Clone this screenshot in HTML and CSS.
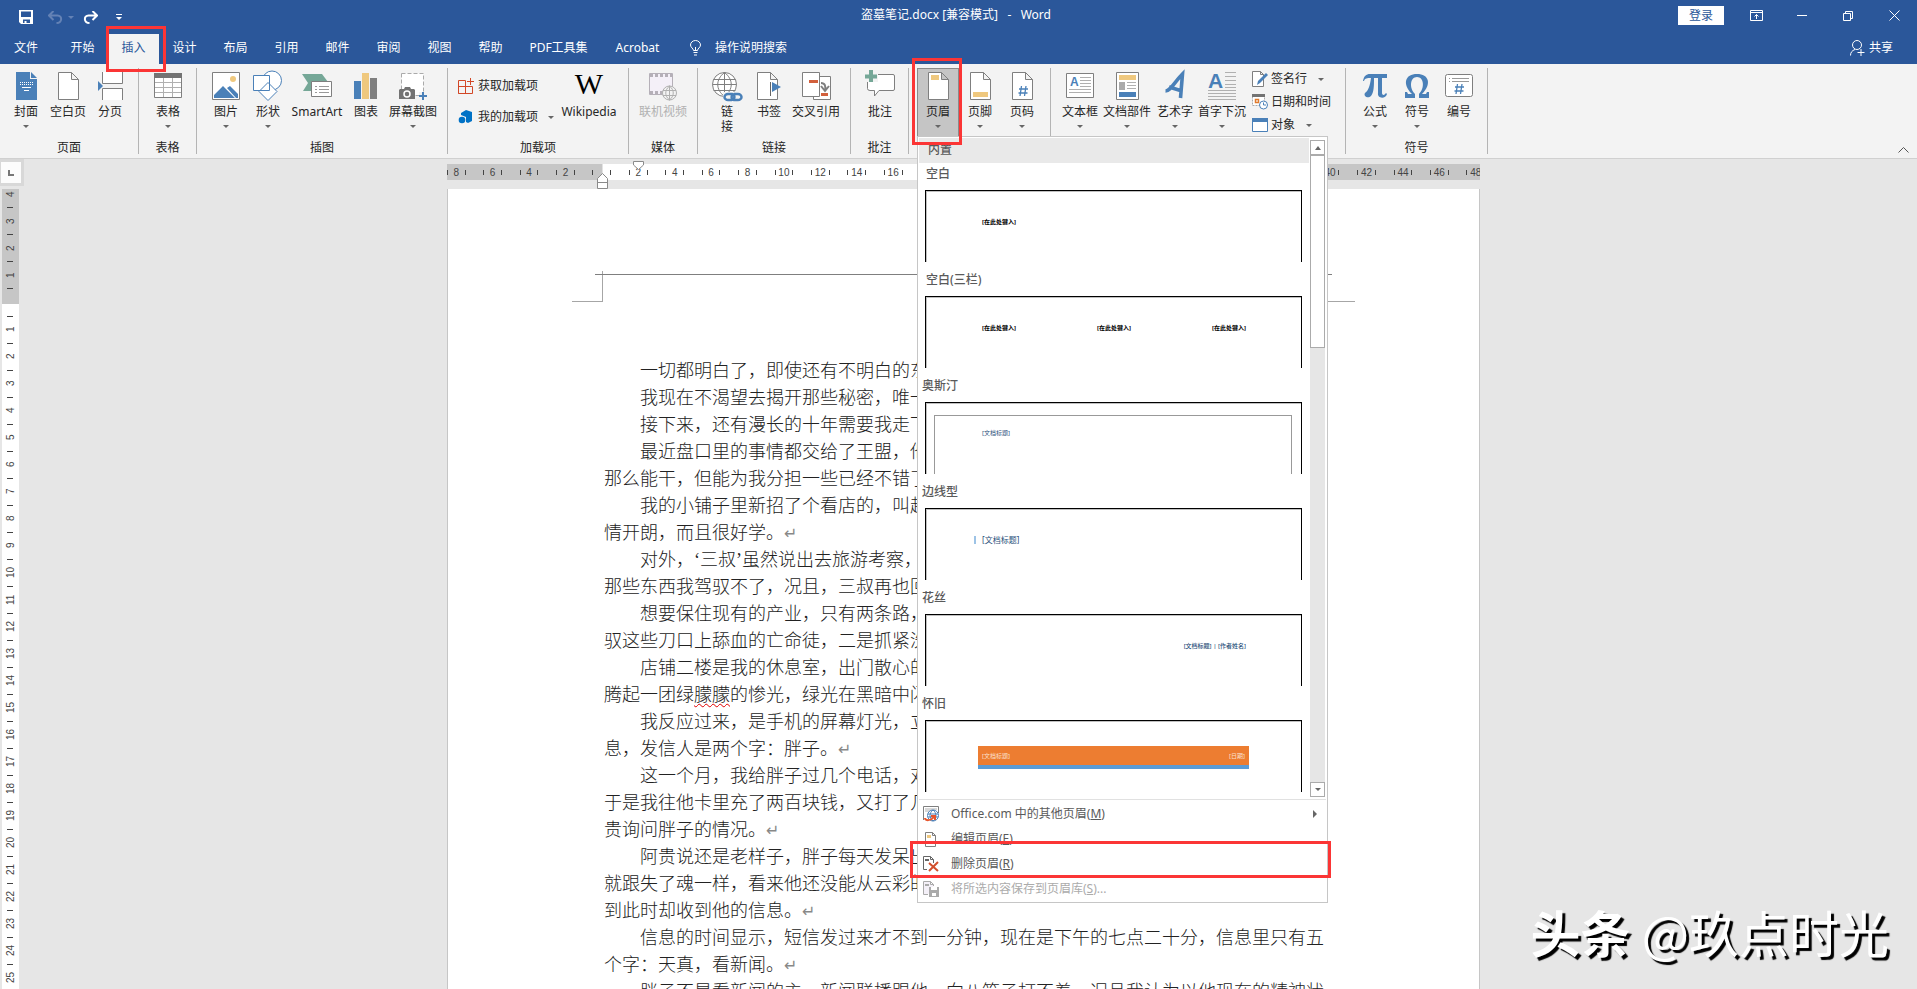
FILE: index.html
```html
<!DOCTYPE html>
<html lang="zh-CN">
<head>
<meta charset="utf-8">
<title>盗墓笔记.docx - Word</title>
<link rel="stylesheet" href="styles.css">
</head>
<body>
<header class="titlebar">
  <div class="quick">
    <button class="icon-btn save" aria-label="保存"><svg width="14" height="14" viewBox="0 0 14 14"><path d="M0 0h14v14H2l-2-2z" fill="#fff"/><path d="M2 1.500h10V7H2zM4 9.500h7V13H7.500v-2H5.500v2H4z" fill="#2b579a"/></svg></button>
    <button class="icon-btn undo" aria-label="撤消"><svg width="15" height="13" viewBox="0 0 15 13"><path d="M5.500 0L1 4.500 5.500 9M1.500 4.500h8c5 0 5 7.500-1 7.500" fill="none" stroke="#6482b5" stroke-width="2"/></svg></button>
    <span class="caret faded"></span>
    <button class="icon-btn redo" aria-label="恢复"><svg width="15" height="13" viewBox="0 0 15 13"><path d="M9.500 0L14 4.500 9.500 9M13.500 4.500h-8c-5 0-5 7.500 1 7.500" fill="none" stroke="#fff" stroke-width="2"/></svg></button>
    <button class="icon-btn more" aria-label="自定义"><svg width="6" height="6" viewBox="0 0 6 6"><path d="M0 0h6v1H0zM0 3h6L3 6z" fill="#fff"/></svg></button>
  </div>
  <h1 class="doc-title">盗墓笔记.docx [兼容模式]&nbsp;&nbsp; -&nbsp;&nbsp; Word</h1>
  <div class="window-tools">
    <button class="login">登录</button>
    <button class="win" aria-label="功能区显示选项"><svg width="13" height="11" viewBox="0 0 13 11" fill="none" stroke="#fff"><path d="M.5.5h12v10H.5zM.5 2.500h12M6.500 9V4.500M4.500 6.500l2-2 2 2"/></svg></button>
    <button class="win" aria-label="最小化"><svg width="10" height="11" viewBox="0 0 10 11"><path d="M0 5h10v1H0z" fill="#fff"/></svg></button>
    <button class="win" aria-label="还原"><svg width="10" height="10" viewBox="0 0 10 10" fill="none" stroke="#fff"><path d="M.5 2.500h7v7h-7zM2.500 2.500v-2h7v7h-2"/></svg></button>
    <button class="win" aria-label="关闭"><svg width="11" height="11" viewBox="0 0 11 11" stroke="#fff"><path d="M.5.5l10 10M10.500.5l-10 10"/></svg></button>
  </div>
</header>
<nav class="tabs">
  <a class="tab file" href="#">文件</a>
  <a class="tab" href="#">开始</a>
  <a class="tab active" href="#">插入<span class="mark mark-tab"></span></a>
  <a class="tab" href="#">设计</a>
  <a class="tab" href="#">布局</a>
  <a class="tab" href="#">引用</a>
  <a class="tab" href="#">邮件</a>
  <a class="tab" href="#">审阅</a>
  <a class="tab" href="#">视图</a>
  <a class="tab" href="#">帮助</a>
  <a class="tab pdf" href="#">PDF工具集</a>
  <a class="tab acrobat" href="#">Acrobat</a>
  <a class="tell" href="#"><svg width="11" height="16" viewBox="0 0 11 16" fill="none" stroke="#fff"><path d="M3.500 10.500c0-2-3-3-3-5.500a5 4.500 0 0 1 10 0c0 2.500-3 3.500-3 5.500zM3.500 12.500h4M4 15h3M5.500 7v3"/></svg>操作说明搜索</a>
  <a class="share" href="#"><svg width="15" height="16" viewBox="0 0 15 16" fill="none" stroke="#fff"><ellipse cx="7" cy="5" rx="4.500" ry="4.500"/><path d="M.5 15.500c0-3 1.500-5 4.500-6M11 9v7M7.500 12.500h7"/></svg>共享</a>
</nav>
<section class="ribbon">
  <div class="group g-pages">
    <div class="tools">
      <button class="tool"><svg width="21" height="28" viewBox="0 0 21 28"><path d="M0 0h14v7h7v21H0z" fill="#4a80b8"/><path d="M15 0l6 6h-6z" fill="#4a80b8"/><path d="M4 10.500h13M4 12.500h13" stroke="#fff" stroke-dasharray="1 1"/><path d="M6 15.500h9M8 18.500h5" stroke="#fff"/></svg>封面<span class="caret"></span></button>
      <button class="tool"><svg width="21" height="28" viewBox="0 0 21 28"><path d="M.5.5h13l7 7v20H.5zM13.500.5v7h7" fill="#fff" stroke="#7f7f7f"/></svg>空白页</button>
      <button class="tool"><svg width="25" height="28" viewBox="0 0 25 28"><path d="M4.500 0v11.500h20V0M4.500 28V16.500h20V28" fill="#fff" stroke="#7f7f7f"/><path d="M0 9l5 5-5 5z" fill="#4a80b8"/></svg>分页</button>
    </div>
    <div class="group-name">页面</div>
  </div>
  <div class="group g-table">
    <div class="tools">
      <button class="tool"><svg width="28" height="28" viewBox="0 0 28 28"><path d="M.5 1.500h27v24H.5z" fill="#fff" stroke="#7f7f7f"/><path d="M0 1h28v5H0z" fill="#737373"/><path d="M1 10.500h26M1 15.500h26M1 20.500h26M9.500 6v19M18.500 6v19" stroke="#b0b0b0"/></svg>表格<span class="caret"></span></button>
    </div>
    <div class="group-name">表格</div>
  </div>
  <div class="group g-illus">
    <div class="tools">
      <button class="tool"><svg width="28" height="28" viewBox="0 0 28 28"><path d="M.5.5h27v27H.5z" fill="#fff" stroke="#7f7f7f"/><circle cx="21" cy="7" r="3" fill="#efc87e"/><path d="M2 26v-3l9-9 12 12zM15 16l3-2 8 8v4h-2z" fill="#4a80b8"/></svg>图片<span class="caret"></span></button>
      <button class="tool"><svg width="30" height="28" viewBox="0 1 30 28" fill="#fff" stroke="#4a80b8"><circle cx="19" cy="9.500" r="9.500"/><path d="M.5 4.500h16v15H.5zM15 11.500l9 9-9 9-9-9z"/></svg>形状<span class="caret"></span></button>
      <button class="tool w-smart"><svg width="30" height="28" viewBox="0 0 30 28"><path d="M0 2h20l6 8-7 9H1l5-8z" fill="#75a797"/><path d="M9.500 9.500h20v15h-20z" fill="#fff" stroke="#7f7f7f"/><path d="M13 14.500h2m2 0h10M13 17.500h2m2 0h10M13 20.500h2m2 0h10" stroke="#999"/></svg>SmartArt</button>
      <button class="tool"><svg width="24" height="28" viewBox="0 0 24 28"><path d="M0 9h7v18H0z" fill="#4a80b8"/><path d="M8 1h7v26H8z" fill="#efc87e"/><path d="M16 6h7v21h-7z" fill="#7f7f7f"/></svg>图表</button>
      <button class="tool w-four"><svg width="28" height="28" viewBox="0 0 28 28"><path d="M2.500 1.500h22v22h-22z" fill="#fff" stroke="#aaa" stroke-dasharray="4 2"/><path d="M0 18l1-1h4l1-2h5l1 2h3l1 1v9H0z" fill="#737373"/><circle cx="8" cy="22" r="3" fill="none" stroke="#fff" stroke-width="1.500"/><path d="M20 20h8v8h-8z" fill="#f3f3f3"/><path d="M20 24h8M24 20v8" stroke="#4a80b8" stroke-width="2"/></svg>屏幕截图<span class="caret"></span></button>
    </div>
    <div class="group-name">插图</div>
  </div>
  <div class="group g-addins">
    <div class="tools">
      <div class="stack stack-two">
        <button class="row-tool"><svg width="16" height="16" viewBox="0 0 16 16" fill="none" stroke="#d24726"><path d="M.5 2.500h7v13h-7zM.5 8.500h14v7H.5M12.500 0v7M9 3.500h7"/></svg>获取加载项</button>
        <button class="row-tool"><svg width="16" height="16" viewBox="0 0 16 16" fill="#0072c6"><path d="M3 4l5-3 6 2v9l-4 2-2-1V8L3 6z"/><circle cx="4" cy="11" r="3.300"/></svg>我的加载项<span class="caret"></span></button>
      </div>
      <button class="tool w-wiki"><svg width="30" height="28" viewBox="0 0 30 28"><text x="15" y="22" text-anchor="middle" class="glyph-w">W</text></svg>Wikipedia</button>
    </div>
    <div class="group-name">加载项</div>
  </div>
  <div class="group g-media">
    <div class="tools">
      <button class="tool w-four" disabled><svg width="28" height="28" viewBox="0 1 28 28"><path d="M.5 2.500h23v21H.5z" fill="#f4f0f8" stroke="#b5b0b8"/><path d="M1 4.500h22M1 21.500h22" stroke="#b5b0b8" stroke-width="3" stroke-dasharray="3 2"/><circle cx="20.500" cy="22" r="7" fill="#f3f3f3" stroke="#b0b0b0"/><path d="M14 19.500h13M14 24.500h13M20.500 15v14M20.500 15c-5 4-5 10 0 14 5-4 5-10 0-14" fill="none" stroke="#b0b0b0"/></svg>联机视频</button>
    </div>
    <div class="group-name">媒体</div>
  </div>
  <div class="group g-links">
    <div class="tools">
      <button class="tool link"><svg width="31" height="28" viewBox="0 0 31 28"><g fill="none" stroke="#7f7f7f"><circle cx="12.500" cy="12.500" r="12" fill="#fff"/><path d="M1.500 7.500h22M.5 12.500h24M1.500 18.500h22M12.500.5v24M12.500.5c-9 7-9 17 0 24 9-7 9-17 0-24"/></g><path d="M11 20h20v10H11z" fill="#f3f3f3"/><path d="M20 28h-4a3.500 3 0 0 1 0-6h4c3 0 3 5 1 5M22 22h4a3.500 3 0 0 1 0 6h-4c-3 0-3-5-1-5" fill="none" stroke="#4a80b8" stroke-width="2.500"/></svg><span>链<br>接</span></button>
      <button class="tool"><svg width="24" height="28" viewBox="0 0 24 28"><path d="M.5.5h13l7 7v20H.5zM13.500.5v7h7" fill="#fff" stroke="#7f7f7f"/><path d="M13 10h1v14h-1z" fill="#666"/><path d="M15 10l9 5-9 5z" fill="#4a80b8"/></svg>书签</button>
      <button class="tool w-four"><svg width="29" height="28" viewBox="0 0 29 28"><path d="M11.500 4.500h17v23h-17z" fill="#fff" stroke="#7f7f7f"/><path d="M.5.5h17v24H.5z" fill="#fff" stroke="#7f7f7f"/><path d="M7 8h9v3H7zM19 21h7v3h-7z" fill="#d2603c"/><path d="M19 11c4 0 5 3 4 8M19 14l4 5 4-5" fill="none" stroke="#7f7f7f" stroke-width="2"/></svg>交叉引用</button>
    </div>
    <div class="group-name">链接</div>
  </div>
  <div class="group g-comment">
    <div class="tools">
      <button class="tool"><svg width="30" height="28" viewBox="0 2 30 28"><path d="M4 4.500h24q1.500 0 1.500 1.500v13q0 1.500-1.500 1.500H14L9.500 26v-5.500H5q-2.500 0-2.500-2V6z" fill="#fff" stroke="#7f7f7f"/><path d="M0 0h13v12H0z" fill="#f3f3f3"/><path d="M0 6.500h12M6 0v12" stroke="#75a797" stroke-width="4"/></svg>批注</button>
    </div>
    <div class="group-name">批注</div>
  </div>
  <div class="group g-header">
    <div class="tools">
      <div class="menu-host">
        <button class="tool pressed" aria-expanded="true"><svg width="21" height="28" viewBox="0 0 21 28"><path d="M.5.5h13l7 7v20H.5zM13.500.5v7h7" fill="#fff" stroke="#7f7f7f"/><path d="M3 3h8v5H3z" fill="#efc87e"/></svg>页眉<span class="caret"></span></button>
        <div class="dropdown">
          <div class="gallery">
            <div class="gallery-list">
              <h2 class="gallery-head">内置</h2>
              <h3 class="item-name">空白</h3>
              <div class="preview"><div class="preview-row"><span>[在此处键入]</span></div></div>
              <h3 class="item-name">空白(三栏)</h3>
              <div class="preview"><div class="preview-row"><span>[在此处键入]</span><span>[在此处键入]</span><span>[在此处键入]</span></div></div>
              <h3 class="item-name near">奥斯汀</h3>
              <div class="preview framed"><div class="frame"><span>[文档标题]</span></div></div>
              <h3 class="item-name near">边线型</h3>
              <div class="preview"><div class="preview-row side"><span class="side-title">[文档标题]</span></div></div>
              <h3 class="item-name near">花丝</h3>
              <div class="preview"><div class="preview-row filigree"><span>[文档标题] | [作者姓名]</span></div></div>
              <h3 class="item-name near">怀旧</h3>
              <div class="preview"><div class="banner"><span>[文档标题]</span><span>[日期]</span></div></div>
            </div>
            <div class="scroll">
              <button class="scroll-btn" aria-label="向上"><span class="caret up"></span></button>
              <div class="thumb"></div>
              <button class="scroll-btn last" aria-label="向下"><span class="caret"></span></button>
            </div>
          </div>
          <div class="menu">
            <button class="menu-item"><svg width="16" height="16" viewBox="0 0 16 16"><path d="M.5 14V.5h15V7" fill="#fff" stroke="#7f7f7f"/><path d="M2 3h12M2 5h6" stroke="#b0b0b0"/><circle cx="10" cy="9.500" r="5.500" fill="#fff" stroke="#4a80b8"/><path d="M5 8h10M5 11h10M10 4c-4 3-4 8 0 11 4-3 4-8 0-11" fill="none" stroke="#4a80b8"/><path d="M2 12c0 3 6 3 9-1M8 10h4v4" fill="none" stroke="#e8552b" stroke-width="2"/></svg><span>Office.com 中的其他页眉(<u>M</u>)</span><i class="sub"></i></button>
            <button class="menu-item"><svg width="16" height="16" viewBox="0 0 16 16"><path d="M2.500 1.500h7l3 3v11h-10zM9.500 1.500v3h3" fill="#fff" stroke="#7f7f7f"/><path d="M4 4h4v3H4z" fill="#efc87e"/></svg><span>编辑页眉(<u>E</u>)</span></button>
            <button class="menu-item"><svg width="16" height="16" viewBox="0 0 16 16"><path d="M4 13.500H.5V.5h7l3 3V7M7.500.5v3h3" fill="#fff" stroke="#666"/><path d="M2 3h4v2H2z" fill="#666"/><path d="M6 7l9 8M15 6l-9 9" stroke="#d2502d" stroke-width="2"/></svg><span>删除页眉(<u>R</u>)</span><span class="mark mark-item"></span></button>
            <button class="menu-item" disabled><svg width="16" height="16" viewBox="0 0 16 16"><path d="M5 13.500H.5V.5h7l3 3V5M7.500.5v3h3" fill="#f4f0f8" stroke="#aaa"/><path d="M2 3h4v2H2z" fill="#aaa"/><path d="M6 6h10v10H6z" fill="#aaa"/><path d="M8 6h6v3H8zM9 12h4v3H9z" fill="#fff"/></svg><span>将所选内容保存到页眉库(<u>S</u>)...</span></button>
          </div>
        </div>
        <span class="mark mark-button"></span>
      </div>
      <button class="tool"><svg width="21" height="28" viewBox="0 0 21 28"><path d="M.5.5h13l7 7v20H.5zM13.500.5v7h7" fill="#fff" stroke="#7f7f7f"/><path d="M3 20h15v5H3z" fill="#efc87e"/></svg>页脚<span class="caret"></span></button>
      <button class="tool"><svg width="21" height="28" viewBox="0 0 21 28"><path d="M.5.5h13l7 7v20H.5zM13.500.5v7h7" fill="#fff" stroke="#7f7f7f"/><path d="M9.500 14L8 24M14 14l-1.500 10M7 17h9M6.500 21h9" stroke="#4a80b8" stroke-width="1.300"/></svg>页码<span class="caret"></span></button>
    </div>
  </div>
  <div class="group g-text">
    <div class="tools">
      <button class="tool"><svg width="28" height="28" viewBox="0 0 28 28"><path d="M.5 1.500h27v24H.5z" fill="#fff" stroke="#7f7f7f"/><text x="4" y="14" class="glyph-a small">A</text><path d="M14 5.500h11M14 8.500h11M14 11.500h11M14 14.500h11M3 17.500h22M3 20.500h22" stroke="#b0b0b0"/></svg>文本框<span class="caret"></span></button>
      <button class="tool w-four"><svg width="23" height="28" viewBox="0 0 23 28"><path d="M.5.5h22v27H.5z" fill="#fff" stroke="#7f7f7f"/><path d="M3 3h17v5H3z" fill="#efc87e"/><path d="M3 20h17v5H3z" fill="#4a80b8"/><path d="M3 10h6v8H3z" fill="#aaa"/><path d="M11 10.500h9M11 13.500h9M11 16.500h9" stroke="#b0b0b0"/></svg>文档部件<span class="caret"></span></button>
      <button class="tool w-art"><svg width="22" height="28" viewBox="0 0 22 28"><path d="M1.500 19c5 0 9-9 17-17l-2 24M5 15l13 4" fill="none" stroke="#4a80b8" stroke-width="3.600"/></svg>艺术字<span class="caret"></span></button>
      <button class="tool w-drop"><svg width="28" height="28" viewBox="0 0 28 28"><text x="0" y="16" class="glyph-a">A</text><path d="M17 .5h11M17 4.500h11M17 8.500h11M17 12.500h11M17 15.500h11M0 18.500h28M0 21.500h28M0 24.500h28M0 27.500h28" stroke="#b0b0b0"/></svg>首字下沉<span class="caret"></span></button>
      <div class="stack stack-three">
        <button class="row-tool"><svg width="16" height="16" viewBox="0 0 16 16"><path d="M.5.5h8l3 3v12H.5zM8.500.5v3h3" fill="#fff" stroke="#7f7f7f"/><path d="M5 14l1-4 8-8 2 2-8 8z" fill="#4a80b8"/></svg>签名行<span class="caret"></span></button>
        <button class="row-tool"><svg width="16" height="16" viewBox="0 0 16 16"><path d="M.5.5h12v11H.5z" fill="#fff" stroke="#aaa" stroke-dasharray="2 1"/><path d="M0 0h13v3H0z" fill="#737373"/><path d="M3.500 5.500h3v3h-3z" fill="none" stroke="#e07b2e" stroke-width="1.500"/><circle cx="11.500" cy="11" r="4" fill="#fff" stroke="#4a80b8"/><path d="M11.500 8.500V11H14" fill="none" stroke="#4a80b8"/></svg>日期和时间</button>
        <button class="row-tool"><svg width="16" height="14" viewBox="0 0 16 14"><path d="M.5.5h15v13H.5z" fill="#fff" stroke="#4a80b8"/><path d="M0 0h16v4H0z" fill="#4a80b8"/></svg>对象<span class="caret"></span></button>
      </div>
    </div>
  </div>
  <div class="group g-symbol">
    <div class="tools">
      <button class="tool"><svg width="26" height="28" viewBox="0 0 26 28"><path d="M1 9C2 4 4 2 8 2h17v4h-5v15c0 2 2 3 4 0l1 1c-1 5-10 5-9-1V6h-4c0 8 0 14-3 18-3 3-8 0-6-3 3-2 5-7 6-15C5 6 3 6 2 9z" fill="#4a80b8"/></svg>公式<span class="caret"></span></button>
      <button class="tool"><svg width="26" height="28" viewBox="0 0 26 28"><path d="M1 26v-6h2l1 2h4C-2 12 1 2 13 2s15 10 5 20h4l1-2h2v6H15v-4c6-6 5-17-2-17s-8 11-2 17v4z" fill="#4a80b8"/></svg>符号<span class="caret"></span></button>
      <button class="tool"><svg width="28" height="28" viewBox="0 0 28 28"><rect x=".5" y="2.500" width="27" height="22" rx="2" fill="#fff" stroke="#7f7f7f"/><path d="M4 6.500h1m2 0h17M4 9.500h1m2 0h17" stroke="#999"/><path d="M12.500 12L11 22M17 12l-1.500 10M10 15h9M9.500 19h9" stroke="#4a80b8" stroke-width="1.300"/></svg>编号</button>
    </div>
    <div class="group-name">符号</div>
  </div>
  <button class="collapse" aria-label="折叠功能区"><svg width="11" height="6" viewBox="0 0 11 6"><path d="M.5 5.500l5-5 5 5" fill="none" stroke="#555"/></svg></button>
</section>
<main class="workspace">
  <div class="left-rail">
    <div class="corner"><button class="tab-stop" aria-label="制表符"><svg width="6" height="6" viewBox="0 0 6 6"><path d="M0 0h2v4h4v2H0z" fill="#777"/></svg></button></div>
    <div class="vruler">
      <div class="vmargin"><span>4</span><span>3</span><span>2</span><span>1</span></div>
      <div class="vbody"><span>1</span><span>2</span><span>3</span><span>4</span><span>5</span><span>6</span><span>7</span><span>8</span><span>9</span><span>10</span><span>11</span><span>12</span><span>13</span><span>14</span><span>15</span><span>16</span><span>17</span><span>18</span><span>19</span><span>20</span><span>21</span><span>22</span><span>23</span><span>24</span><span>25</span></div>
    </div>
  </div>
  <div class="canvas">
    <div class="hruler">
      <div class="hbar"><div class="hscale"><span>8</span><span>6</span><span>4</span><span>2</span><span></span><span>2</span><span>4</span><span>6</span><span>8</span><span>10</span><span>12</span><span>14</span><span>16</span><span>18</span><span>20</span><span>22</span><span>24</span><span>26</span><span>28</span><span>30</span><span>32</span><span>34</span><span>36</span><span>38</span><span>40</span><span>42</span><span>44</span><span>46</span><span>48</span></div></div>
      <svg class="indent-first" width="11" height="9" viewBox="0 0 11 9"><path d="M.5.5h10V4l-5 4.500-5-4.500z" fill="#fff" stroke="#8a8a8a"/></svg>
      <svg class="indent-left" width="11" height="16" viewBox="0 0 11 16"><path d="M5.500.5l5 5v10H.5v-10zM.5 9.500h10" fill="#fff" stroke="#8a8a8a"/></svg>
    </div>
    <article class="page">
      <div class="page-head"><div class="crop-left"></div><div class="head-rule"></div><div class="crop-right"></div></div>
      <div class="text">
        <p>一切都明白了，即使还有不明白的东</p>
        <p>我现在不渴望去揭开那些秘密，唯一</p>
        <p>接下来，还有漫长的十年需要我走下</p>
        <p>最近盘口里的事情都交给了王盟，他<br>那么能干，但能为我分担一些已经不错了</p>
        <p>我的小铺子里新招了个看店的，叫赵<br>情开朗，而且很好学。<i class="ret">↵</i></p>
        <p>对外，‘三叔’虽然说出去旅游考察，<br>那些东西我驾驭不了，况且，三叔再也回</p>
        <p>想要保住现有的产业，只有两条路，<br>驭这些刀口上舔血的亡命徒，二是抓紧洗</p>
        <p>店铺二楼是我的休息室，出门散心的<br>腾起一团绿<span class="typo">朦朦</span>的惨光，绿光在黑暗中闪</p>
        <p>我反应过来，是手机的屏幕灯光，立<br>息，发信人是两个字：胖子。<i class="ret">↵</i></p>
        <p>这一个月，我给胖子过几个电话，对<br>于是我往他卡里充了两百块钱，又打了几<br>贵询问胖子的情况。<i class="ret">↵</i></p>
        <p>阿贵说还是老样子，胖子每天发呆出<br>就跟失了魂一样，看来他还没能从云彩的<br>到此时却收到他的信息。<i class="ret">↵</i></p>
        <p>信息的时间显示，短信发过来才不到一分钟，现在是下午的七点二十分，信息里只有五<br>个字：天真，看新闻。<i class="ret">↵</i></p>
        <p>胖子不是看新闻的主，新闻联播跟他一向八竿子打不着，况且我认为以他现在的精神状</p>
      </div>
    </article>
  </div>
</main>
<div class="watermark"><b>头条</b> <span>@玖点时光</span></div>
</body>
</html>
```

FILE: styles.css
```css
* { box-sizing: border-box; }
body {
  margin: 0;
  height: 100vh;
  overflow: hidden;
  display: flex;
  flex-direction: column;
  background: #e6e6e6;
  color: #262626;
  font: 12px/16px "Noto Sans", "Noto Sans CJK SC", sans-serif;
}
button {
  margin: 0;
  padding: 0;
  border: 0;
  background: none;
  color: inherit;
  font: inherit;
}
a { color: inherit; text-decoration: none; }
svg { display: block; flex: none; }
h1, h2, h3, p { margin: 0; font-size: 12px; font-weight: 400; }

.caret {
  width: 0;
  height: 0;
  border: 3px solid transparent;
  border-top-color: #666;
  border-bottom: 0;
}
.caret.up { border-top: 0; border-bottom: 4px solid #666; }
.caret.faded { border-top-color: #6482b5; }

/* Title bar */
.titlebar {
  flex: none;
  height: 34px;
  display: grid;
  grid-template-columns: 1fr auto 1fr;
  align-items: center;
  background: #2b579a;
  color: #fff;
}
.quick { display: flex; align-items: center; padding-left: 19px; }
.undo { margin-left: 15px; }
.quick .caret { margin: 0 9px 0 5px; }
.more { margin-left: 18px; }
.doc-title { padding: 0 5px 4px 0; }
.window-tools {
  display: flex;
  justify-content: flex-end;
  align-items: center;
  height: 31px;
  align-self: start;
}
.login {
  width: 46px;
  height: 19px;
  margin-right: 9px;
  background: #fff;
  color: #2b579a;
}
.win { width: 46px; height: 30px; display: grid; place-items: center; }

/* Tabs */
.tabs {
  flex: none;
  height: 30px;
  display: flex;
  background: #2b579a;
  color: #fff;
  line-height: 27px;
}
.tab { position: relative; width: 51px; text-align: center; }
.tab.file { width: 52px; margin-right: 5px; }
.tab.pdf { width: 85px; }
.tab.acrobat { width: 73px; }
.tab.active { background: #f3f3f3; color: #2b579a; }
.tell { display: flex; gap: 14px; align-items: center; padding: 0 0 3px 16px; }
.share { display: flex; gap: 4px; align-items: center; margin-left: auto; padding: 0 24px 3px 0; }

/* Call-out frames */
.mark { position: absolute; border: 3px solid #fb3535; z-index: 5; pointer-events: none; }
.mark-tab { inset: -8px -7px -8px -2px; }
.mark-button { inset: -10px -3px -8px -5px; z-index: 12; }
.mark-item { inset: -10px -5px -2px -9px; }

/* Ribbon */
.ribbon {
  flex: none;
  height: 95px;
  display: flex;
  align-items: flex-start;
  padding-top: 4px;
  background: #f3f3f3;
  border-bottom: 1px solid #d0d0d0;
}
.group {
  height: 86px;
  flex: none;
  border-right: 1px solid #b4b4b4;
}
.tools { display: flex; height: 69px; padding-left: 8px; }
.group-name { margin-top: 3px; text-align: center; }
.g-pages { width: 139px; }
.g-pages .tools { padding-left: 5px; }
.g-table { width: 58px; }
.g-illus { width: 251px; }
.g-addins { width: 181px; }
.g-media { width: 69px; }
.g-links { width: 153px; }
.g-comment { width: 58px; }
.g-header { width: 142px; }
.g-text { width: 295px; }
.g-symbol { width: 142px; }

.tool {
  width: 42px;
  height: 69px;
  padding-top: 4px;
  display: flex;
  flex-direction: column;
  align-items: center;
  justify-content: flex-start;
  flex: none;
  white-space: nowrap;
}
.tool svg { margin-bottom: 4px; overflow: visible; }
.tool .caret { margin-top: 5px; }
.tool:disabled { color: #b1b1b1; }
.tool.link { line-height: 15px; }
.tool.w-smart { width: 56px; }
.tool.w-four { width: 52px; }
.tool.w-wiki { width: 60px; }
.tool.w-art { width: 44px; }
.tool.w-drop { width: 50px; }
.tool.pressed { background: #c5c5c5; border: 1px solid #8a8a8a; padding-top: 3px; }

.stack { display: flex; flex-direction: column; align-items: flex-start; }
.stack-two { width: 101px; margin-left: 2px; padding-top: 9px; gap: 13px; }
.stack-three { margin-left: 5px; padding-top: 2px; gap: 5px; }
.row-tool { display: flex; align-items: center; gap: 4px; height: 18px; white-space: nowrap; }
.stack-three .row-tool { gap: 3px; }
.row-tool .caret { margin-left: 6px; }
.stack-three .caret { margin-left: 8px; }
.glyph-w { font: 30px "Liberation Serif", serif; fill: #000; }
.glyph-a { font: bold 21px "Liberation Sans", sans-serif; fill: #4a80b8; }
.glyph-a.small { font-size: 12px; }
.collapse { margin: 79px 8px 0 auto; }

/* Header gallery */
.menu-host { position: relative; width: 42px; }
.dropdown {
  position: absolute;
  z-index: 10;
  top: 68px;
  left: 0;
  width: 411px;
  padding: 1px;
  background: #fff;
  border: 1px solid #c6c6c6;
  color: #5a5a5a;
}
.gallery { display: flex; border-bottom: 1px solid #e1e1e1; }
.gallery-list { flex: 1; }
.gallery-head { height: 25px; padding-left: 9px; background: #e9e9e9; line-height: 24px; font-weight: 500; }
.item-name { height: 27px; padding-left: 7px; line-height: 22px; font-weight: 500; }
.item-name.near { padding-left: 3px; }
.preview {
  height: 72px;
  margin: 0 7px 7px 6px;
  border: 1px solid #000;
  border-bottom: 0;
  box-shadow: inset 1px 1px 0 #c0c0c0;
  font-size: 6px;
  line-height: 8px;
}
.preview-row {
  display: flex;
  justify-content: space-between;
  padding: 27px 55px 0 56px;
  color: #000;
  font-weight: 700;
}
.side { justify-content: flex-start; padding-left: 48px; color: #1f4e79; font-size: 8px; font-weight: 400; }
.side-title { padding-left: 6px; border-left: 2px solid #9dc3e6; }
.filigree { justify-content: flex-end; color: #1f4e79; font-weight: 500; }
.framed { padding: 12px 9px 0 8px; }
.frame {
  height: 59px;
  padding: 13px 47px 0;
  border: 1px solid #999;
  border-bottom: 0;
  color: #1f4e79;
}
.banner {
  display: flex;
  justify-content: space-between;
  margin: 25px 52px 0;
  padding: 6px 4px 5px;
  background: #ed7d31;
  border-bottom: 4px solid #5b9bd5;
  color: #fbe0cf;
}
.scroll {
  width: 15px;
  margin: 2px 1px 2px 1px;
  display: flex;
  flex-direction: column;
  background: #e6e6e6;
}
.scroll-btn {
  height: 15px;
  display: grid;
  place-items: center;
  border: 1px solid #ababab;
  background: #fff;
}
.scroll-btn.last { margin-top: auto; }
.thumb { height: 193px; border: 1px solid #ababab; background: #fff; }
.menu { padding: 1px 0 0; }
.menu-item {
  position: relative;
  width: 100%;
  height: 25px;
  display: flex;
  align-items: center;
  gap: 12px;
  padding-left: 4px;
  text-align: left;
}
.menu-item:disabled { color: #ababab; }
.sub {
  margin: 0 9px 0 auto;
  border: 4px solid transparent;
  border-left-color: #666;
  border-right: 0;
}

/* Workspace */
.workspace {
  flex: 1;
  min-height: 0;
  display: grid;
  grid-template-columns: 24px 1fr;
  grid-template-rows: 100%;
  padding-right: 14px;
}
.left-rail { display: flex; flex-direction: column; min-height: 0; }
.corner { flex: none; height: 27px; padding: 3px 3px 3px 1px; background: #d8d8d8; }
.tab-stop { width: 20px; height: 21px; display: grid; place-items: center; background: #fcfcfc; }
.vruler {
  flex: 1;
  min-height: 0;
  width: 17px;
  margin: 3px 0 0 2px;
  overflow: hidden;
  background: #fff;
  color: #444;
  font: 10px/17px "Liberation Sans", sans-serif;
}
.vmargin {
  height: 115px;
  display: flex;
  flex-direction: column;
  justify-content: flex-end;
  padding-bottom: 15px;
  overflow: hidden;
  background: #c6c6c6;
}
.vbody { padding-top: 12px; }
.vruler span {
  display: block;
  flex: none;
  height: 27px;
  writing-mode: vertical-rl;
  transform: rotate(180deg);
  text-align: center;
  background: linear-gradient(#444, #444) center bottom / 6px 1px no-repeat;
}
.vmargin span { background-position: center top; }

.canvas { min-width: 0; display: flex; flex-direction: column; align-items: center; }
.hruler, .page { width: 1033px; max-width: 100%; }
.hruler { position: relative; flex: none; padding: 5px 0 9px; }
.hbar {
  height: 16px;
  overflow: hidden;
  background: linear-gradient(90deg, #c6c6c6 155px, #fff 156px, #fff 881px, #c6c6c6 881px);
}
.hscale {
  display: grid;
  grid-template-columns: repeat(29, 1fr);
  margin: 0 -14px 0 -9px;
  color: #444;
  font: 10px/17px "Liberation Sans", sans-serif;
  text-align: center;
}
.hscale span {
  height: 16px;
  background:
    linear-gradient(#444, #444) 25% 6px / 1px 5px no-repeat,
    linear-gradient(#444, #444) 75% 6px / 1px 5px no-repeat;
}
.indent-first { position: absolute; left: 186px; top: 2px; }
.indent-left { position: absolute; left: 150px; top: 14px; }

.page {
  flex: 1;
  min-height: 0;
  overflow: hidden;
  background: #fff;
  border: solid #c6c6c6;
  border-width: 0 1px;
}
.page-head { display: flex; height: 31px; margin: 82px 124px 56px; }
.crop-left { width: 31px; border: solid #a6a6a6; border-width: 0 1px 1px 0; }
.crop-right { width: 28px; border: solid #a6a6a6; border-width: 0 0 1px 1px; }
.head-rule { flex: 1; height: 4px; margin: 0 -5px 0 -8px; border-bottom: 1px solid #7f7f7f; }
.text {
  margin: 0 140px 0 156px;
  color: #222;
  font: 300 18px/27px "Liberation Serif", "Noto Sans CJK SC", serif;
  white-space: nowrap;
}
.text p { font-size: 18px; font-weight: 300; text-indent: 2em; }
.ret { color: #888; font: 16px/20px "DejaVu Sans", sans-serif; }
.typo { text-decoration: underline wavy #e00000 1px; text-underline-offset: 2px; }

.watermark {
  position: fixed;
  right: 28px;
  bottom: 26px;
  z-index: 20;
  color: #fff;
  font: 50px/64px "Noto Sans CJK SC", sans-serif;
  text-shadow: 3px 3px 1px #000;
}
```
